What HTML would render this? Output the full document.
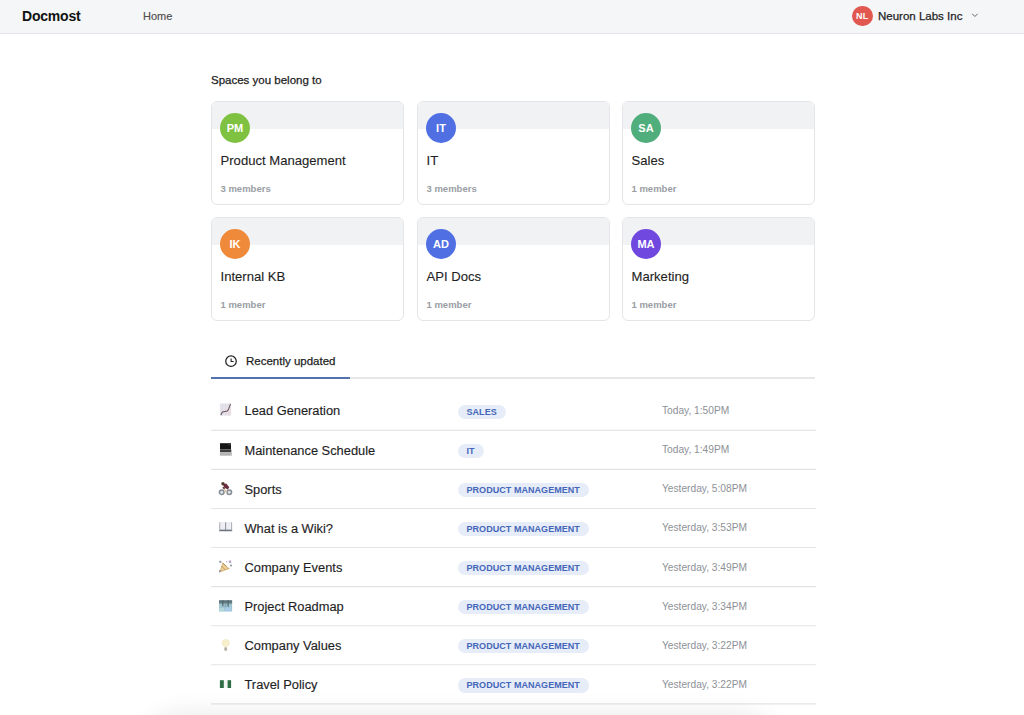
<!DOCTYPE html>
<html>
<head>
<meta charset="utf-8">
<style>
* { box-sizing: border-box; margin: 0; padding: 0; }
html, body { width: 1024px; height: 715px; overflow: hidden; background: #fff; }
body { font-family: "Liberation Sans", sans-serif; color: #1f1f1f; position: relative; }
.abs { position: absolute; white-space: nowrap; }
#hdr { position: absolute; left: 0; top: 0; width: 1024px; height: 34px; background: #f5f6f8; border-bottom: 1px solid #e4e5e8; }
.logo { left: 22px; top: 7.5px; font-size: 14px; letter-spacing: -0.2px; font-weight: bold; color: #111; }
.home { left: 143px; top: 10px; font-size: 11px; color: #4d4d4d; -webkit-text-stroke: 0.15px #4d4d4d; }
.nl { left: 852px; top: 5.5px; width: 20.5px; height: 20.5px; border-radius: 50%; background: #e0584f; color: #fff; font-size: 9px; font-weight: bold; text-align: center; line-height: 20.5px; letter-spacing: 0.2px; }
.org { left: 878px; top: 9.7px; font-size: 11.5px; color: #1f1f1f; -webkit-text-stroke: 0.25px #1f1f1f; }
.chev { left: 970.5px; top: 12px; }
.sec { left: 211px; top: 73.5px; font-size: 11.5px; color: #222; -webkit-text-stroke: 0.25px #222; }
.card { position: absolute; width: 193px; height: 104px; border: 1px solid #e3e5e8; border-radius: 6px; overflow: hidden; background: #fff; }
.card .band { position: absolute; left: 0; top: 0; right: 0; height: 27px; background: #f1f2f4; }
.card .av { position: absolute; left: 8px; top: 11px; width: 30px; height: 30px; border-radius: 50%; color: #fff; font-size: 11px; font-weight: bold; text-align: center; line-height: 30px; }
.card .t { position: absolute; left: 8.5px; top: 51px; font-size: 13.1px; color: #1f1f1f; white-space: nowrap; -webkit-text-stroke: 0.12px #1f1f1f; }
.card .m { position: absolute; left: 8.5px; top: 81.3px; font-size: 9.5px; font-weight: bold; color: #9a9ea4; white-space: nowrap; }
.tabline { position: absolute; left: 211px; top: 377px; width: 604px; height: 2px; background: #e6e7e8; }
.tabact { position: absolute; left: 211px; top: 377px; width: 139px; height: 2px; background: #5273ad; }
.tabtxt { left: 246px; top: 355px; font-size: 11.5px; color: #1f1f1f; -webkit-text-stroke: 0.25px #1f1f1f; }
.row { position: absolute; left: 210.5px; width: 605.5px; height: 39.07px; }
.row .ic { position: absolute; left: 8px; top: 13px; width: 12px; height: 12px; }
.row .tt { position: absolute; left: 34px; top: 12.1px; font-size: 12.85px; -webkit-text-stroke: 0.15px #1f1f1f; color: #1f1f1f; white-space: nowrap; }
.badge { position: absolute; left: 247px; top: 13.2px; height: 14.5px; border-radius: 7.25px; background: #e7edf8; color: #4566b8; font-size: 9px; font-weight: bold; letter-spacing: 0.05px; padding: 0 9px; line-height: 14.5px; white-space: nowrap; }
.row .dt { position: absolute; left: 451.5px; top: 13.9px; font-size: 10.2px; color: #8d9197; white-space: nowrap; }
</style>
</head>
<body>
<div id="hdr"></div>
<div class="abs logo">Docmost</div>
<div class="abs home">Home</div>
<div class="abs nl">NL</div>
<div class="abs org">Neuron Labs Inc</div>
<svg class="abs chev" width="8" height="6" viewBox="0 0 8 6"><path d="M1.2 1.8 L3.9 4.5 L6.6 1.8" fill="none" stroke="#666" stroke-width="1"/></svg>

<div class="abs sec">Spaces you belong to</div>

<div class="card" style="left:211px;top:101px"><div class="band"></div><div class="av" style="background:#7fc241">PM</div><div class="t">Product Management</div><div class="m">3 members</div></div>
<div class="card" style="left:417px;top:101px"><div class="band"></div><div class="av" style="background:#4f6fe3">IT</div><div class="t">IT</div><div class="m">3 members</div></div>
<div class="card" style="left:622px;top:101px"><div class="band"></div><div class="av" style="background:#4fae7c">SA</div><div class="t">Sales</div><div class="m">1 member</div></div>
<div class="card" style="left:211px;top:217px"><div class="band"></div><div class="av" style="background:#ee8a3a">IK</div><div class="t">Internal KB</div><div class="m">1 member</div></div>
<div class="card" style="left:417px;top:217px"><div class="band"></div><div class="av" style="background:#4f6fe3">AD</div><div class="t">API Docs</div><div class="m">1 member</div></div>
<div class="card" style="left:622px;top:217px"><div class="band"></div><div class="av" style="background:#7048e0">MA</div><div class="t">Marketing</div><div class="m">1 member</div></div>

<svg class="abs" style="left:225px;top:355px" width="13" height="13" viewBox="0 0 13 13"><circle cx="6" cy="6.2" r="5.25" fill="none" stroke="#222" stroke-width="1.25"/><path d="M6.1 3.4 V6.5 H8.7" fill="none" stroke="#222" stroke-width="1.1"/></svg>
<div class="abs tabtxt">Recently updated</div>
<div class="tabline"></div>
<div class="tabact"></div>

<div class="row" style="top:391.35px"><div class="tt">Lead Generation</div><div class="badge">SALES</div><div class="dt">Today, 1:50PM</div></div>
<div class="row" style="top:430.42px"><div class="tt">Maintenance Schedule</div><div class="badge">IT</div><div class="dt">Today, 1:49PM</div></div>
<div class="row" style="top:469.49px"><div class="tt">Sports</div><div class="badge">PRODUCT MANAGEMENT</div><div class="dt">Yesterday, 5:08PM</div></div>
<div class="row" style="top:508.56px"><div class="tt">What is a Wiki?</div><div class="badge">PRODUCT MANAGEMENT</div><div class="dt">Yesterday, 3:53PM</div></div>
<div class="row" style="top:547.63px"><div class="tt">Company Events</div><div class="badge">PRODUCT MANAGEMENT</div><div class="dt">Yesterday, 3:49PM</div></div>
<div class="row" style="top:586.70px"><div class="tt">Project Roadmap</div><div class="badge">PRODUCT MANAGEMENT</div><div class="dt">Yesterday, 3:34PM</div></div>
<div class="row" style="top:625.77px"><div class="tt">Company Values</div><div class="badge">PRODUCT MANAGEMENT</div><div class="dt">Yesterday, 3:22PM</div></div>
<div class="row" style="top:664.84px"><div class="tt">Travel Policy</div><div class="badge">PRODUCT MANAGEMENT</div><div class="dt">Yesterday, 3:22PM</div></div>
<svg class="abs" style="left:210.5px;top:420px" width="606" height="295" viewBox="0 0 606 295"><g stroke="#e3e4e6" stroke-width="1.1"><line x1="0" x2="605" y1="10.35" y2="10.35"/><line x1="0" x2="605" y1="49.42" y2="49.42"/><line x1="0" x2="605" y1="88.49" y2="88.49"/><line x1="0" x2="605" y1="127.56" y2="127.56"/><line x1="0" x2="605" y1="166.63" y2="166.63"/><line x1="0" x2="605" y1="205.70" y2="205.70"/><line x1="0" x2="605" y1="244.77" y2="244.77"/><line x1="0" x2="605" y1="283.84" y2="283.84"/></g></svg>
<svg class="abs" style="left:217px;top:401.25px" width="17" height="17" viewBox="0 0 17 17"><rect x="2.9" y="2.4" width="11.2" height="12" rx="0.6" fill="#e4e3eb"/><rect x="8.5" y="7" width="5.6" height="7.4" fill="#ebe0e6"/><path d="M5.5 2.4 V14.4 M8.5 2.4 V14.4 M11.3 2.4 V14.4" stroke="#d2d0da" stroke-width="0.5"/><polyline points="4,13.75 5.4,11.05 10.4,10.05 11.8,7.65 13.4,3.35" fill="none" stroke="#66535b" stroke-width="1.05" stroke-linejoin="round" stroke-linecap="round"/></svg>
<svg class="abs" style="left:217px;top:440.32px" width="17" height="17" viewBox="0 0 17 17"><rect x="3" y="3.2" width="11" height="6.2" fill="#141414"/><rect x="11.5" y="3.4" width="2.2" height="2" fill="#3a3a3a"/><rect x="3" y="9.4" width="11.3" height="2.9" fill="#3e3e3e"/><rect x="2.9" y="12.3" width="11.9" height="3.4" fill="#b4b4b4"/></svg>
<svg class="abs" style="left:217px;top:479.39px" width="17" height="17" viewBox="0 0 17 17"><circle cx="4.7" cy="13.2" r="2.3" fill="#dfe2e6" stroke="#868c96" stroke-width="1.5"/><circle cx="12.3" cy="13.2" r="2.3" fill="#dfe2e6" stroke="#868c96" stroke-width="1.5"/><polygon points="6,5.2 9.2,4.5 12.3,8.2 10.8,10.6 7,8.6" fill="#6a2a3e"/><circle cx="6" cy="4.7" r="1.7" fill="#55382f"/><path d="M5.8 8.3 L7.6 10" stroke="#55382f" stroke-width="1.4"/><path d="M7.6 10 L8.6 12 L9.3 14" stroke="#e0c79e" stroke-width="1.3" fill="none"/></svg>
<svg class="abs" style="left:217px;top:518.46px" width="17" height="17" viewBox="0 0 17 17"><rect x="2.6" y="4.3" width="12.3" height="8.8" fill="#e6e5ee"/><rect x="3.4" y="5" width="4.6" height="6" fill="#efeef5"/><rect x="9.4" y="5" width="4.6" height="6" fill="#efeef5"/><rect x="2.4" y="11.7" width="12.7" height="1.5" fill="#6b737c"/><rect x="2.4" y="4.3" width="0.8" height="9" fill="#9a9da6"/><rect x="14.3" y="4.3" width="0.8" height="9" fill="#9a9da6"/><rect x="8.3" y="4.3" width="0.8" height="9" fill="#767c85"/></svg>
<svg class="abs" style="left:217px;top:557.53px" width="17" height="17" viewBox="0 0 17 17"><polygon points="2.3,14.6 5.5,4.8 12.8,10.8" fill="#d9b27a"/><polygon points="4,11.5 6.2,6.2 10.5,10 7,12.5" fill="#ecd39a"/><path d="M5.8 4.8 L9.5 8.5 M4.5 8 L8.5 12" stroke="#b08451" stroke-width="0.8"/><rect x="2.4" y="2.8" width="1.9" height="2" fill="#8a8e9a"/><rect x="11.8" y="2.5" width="2.4" height="2.4" fill="#b9a6c9"/><rect x="13" y="6.6" width="2" height="1.8" fill="#9aa0aa"/><rect x="2" y="12.2" width="1.6" height="2" fill="#8e909c"/><rect x="9" y="3" width="1.2" height="1.4" fill="#cdb8d4"/></svg>
<svg class="abs" style="left:217px;top:596.60px" width="17" height="17" viewBox="0 0 17 17"><rect x="2" y="3.3" width="13.1" height="11.1" fill="#9fc7d2"/><rect x="2" y="3.3" width="13.1" height="2.6" fill="#5d747c"/><rect x="2" y="5.9" width="13.1" height="1.2" fill="#7f979e"/><rect x="5.3" y="3.3" width="1.1" height="6" fill="#4c636b"/><rect x="10.6" y="3.3" width="1.1" height="6.5" fill="#4c636b"/><rect x="7.5" y="7" width="2" height="3.5" fill="#86aab3"/><rect x="8" y="10.4" width="6" height="4" fill="#aacaea"/><rect x="2" y="11" width="5" height="3.4" fill="#b2d6d9"/></svg>
<svg class="abs" style="left:217px;top:635.67px" width="17" height="17" viewBox="0 0 17 17"><circle cx="8.7" cy="7" r="3.6" fill="#f7efcc" stroke="#ece3bf" stroke-width="0.6"/><rect x="7.3" y="11.3" width="2.8" height="3.4" rx="0.6" fill="#b6b1a5"/></svg>
<svg class="abs" style="left:217px;top:674.74px" width="17" height="17" viewBox="0 0 17 17"><rect x="2.9" y="5.2" width="4" height="7.8" fill="#2f6e45"/><rect x="6.9" y="5.2" width="3.7" height="7.8" fill="#f4f6f4"/><rect x="10.6" y="5.2" width="3.5" height="7.8" fill="#2f6e45"/></svg>
<div style="position:absolute;left:150px;top:722px;width:620px;height:60px;border-radius:30px;box-shadow:0 0 26px 8px rgba(0,0,0,0.09);"></div>
</body>
</html>
